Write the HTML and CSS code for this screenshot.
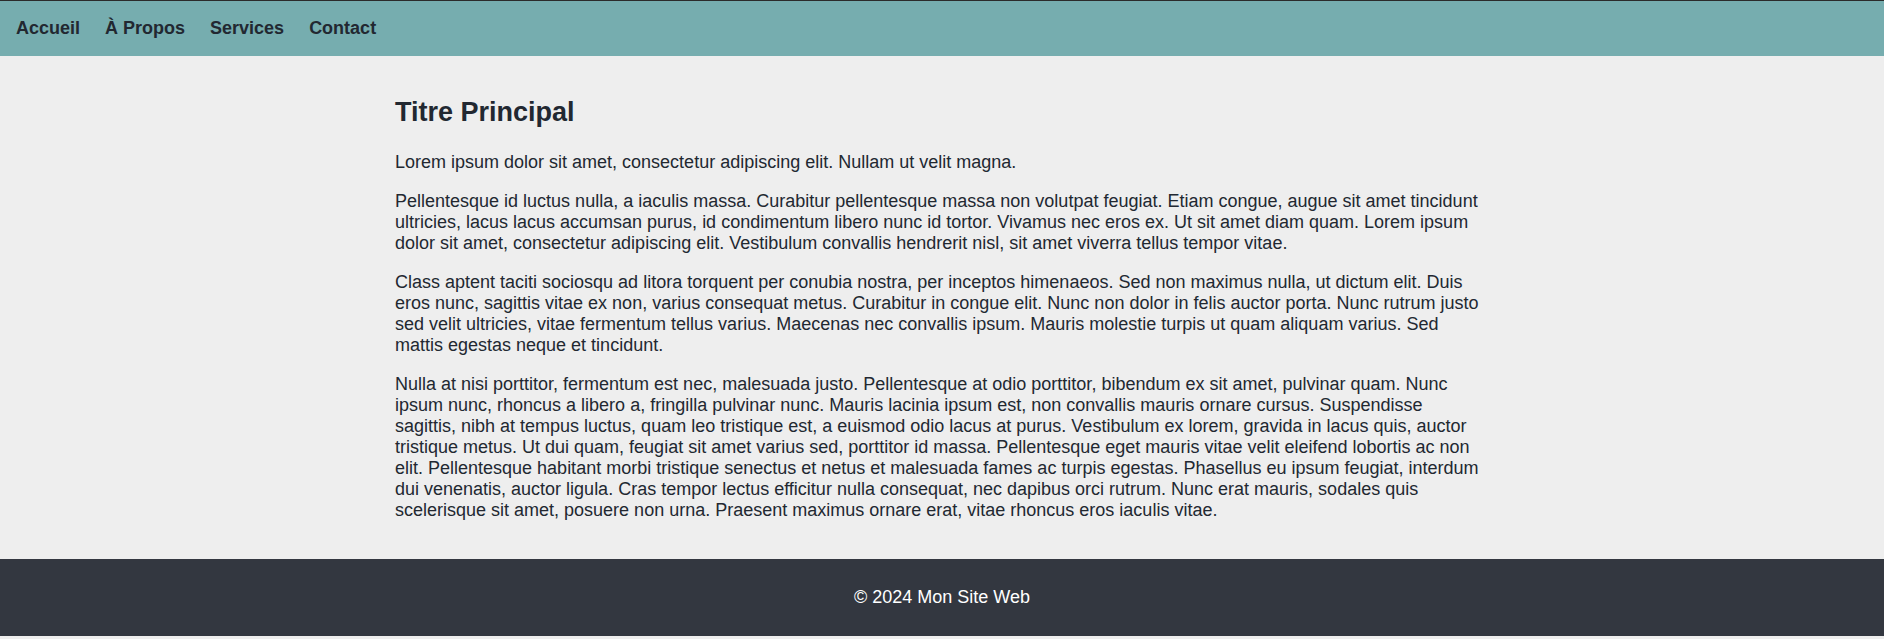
FILE: index.html
```html
<!DOCTYPE html>
<html lang="fr">
<head>
<meta charset="UTF-8" />
<title>Mon Site Web</title>
<link rel="stylesheet" href="styles.css">
</head>
<body>

<header>
  <nav>
    <a href="#">Accueil</a>
    <a href="#">À Propos</a>
    <a href="#">Services</a>
    <a href="#">Contact</a>
  </nav>
</header>

<main class="container">
  <h1>Titre Principal</h1>
  <p>Lorem ipsum dolor sit amet, consectetur adipiscing elit. Nullam ut velit magna.</p>
  <p>Pellentesque id luctus nulla, a iaculis massa. Curabitur pellentesque massa non volutpat feugiat. Etiam congue, augue sit amet tincidunt ultricies, lacus lacus accumsan purus, id condimentum libero nunc id tortor. Vivamus nec eros ex. Ut sit amet diam quam. Lorem ipsum dolor sit amet, consectetur adipiscing elit. Vestibulum convallis hendrerit nisl, sit amet viverra tellus tempor vitae.</p>
  <p>Class aptent taciti sociosqu ad litora torquent per conubia nostra, per inceptos himenaeos. Sed non maximus nulla, ut dictum elit. Duis eros nunc, sagittis vitae ex non, varius consequat metus. Curabitur in congue elit. Nunc non dolor in felis auctor porta. Nunc rutrum justo sed velit ultricies, vitae fermentum tellus varius. Maecenas nec convallis ipsum. Mauris molestie turpis ut quam aliquam varius. Sed mattis egestas neque et tincidunt.</p>
  <p>Nulla at nisi porttitor, fermentum est nec, malesuada justo. Pellentesque at odio porttitor, bibendum ex sit amet, pulvinar quam. Nunc ipsum nunc, rhoncus a libero a, fringilla pulvinar nunc. Mauris lacinia ipsum est, non convallis mauris ornare cursus. Suspendisse sagittis, nibh at tempus luctus, quam leo tristique est, a euismod odio lacus at purus. Vestibulum ex lorem, gravida in lacus quis, auctor tristique metus. Ut dui quam, feugiat sit amet varius sed, porttitor id massa. Pellentesque eget mauris vitae velit eleifend lobortis ac non elit. Pellentesque habitant morbi tristique senectus et netus et malesuada fames ac turpis egestas. Phasellus eu ipsum feugiat, interdum dui venenatis, auctor ligula. Cras tempor lectus efficitur nulla consequat, nec dapibus orci rutrum. Nunc erat mauris, sodales quis scelerisque sit amet, posuere non urna. Praesent maximus ornare erat, vitae rhoncus eros iaculis vitae.</p>
</main>

<footer>
  <p>&copy; 2024 Mon Site Web</p>
</footer>

</body>
</html>
```

FILE: styles.css
```css
body {
  font-family: "Liberation Sans", Arial, sans-serif;
  font-size: 18px;
  background-color: #eeeeee;
  color: #222831;
  margin: 0 0 3px 0;
  padding: 0;
}
header {
  background-color: #76adaf;
  border-top: 1px solid #2b2b2b;
  padding: 17px 16px;
}
nav {
  display: flex;
  gap: 25px;
}
nav a {
  color: #222831;
  font-weight: bold;
  text-decoration: none;
}
.container {
  max-width: 1088px;
  margin: 0 auto;
  padding: 20px 6px 20px 0;
}
h1 {
  font-size: 27px;
  margin: 21px 0 24px;
}
p {
  margin: 18px 0;
}
footer {
  background-color: #333740;
  color: #ffffff;
  text-align: center;
  padding: 28px 0;
}
footer p {
  margin: 0;
}
```
